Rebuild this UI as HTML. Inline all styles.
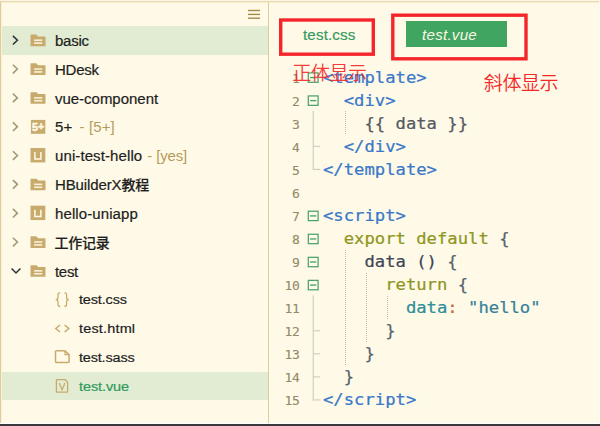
<!DOCTYPE html>
<html lang="zh">
<head>
<meta charset="utf-8">
<title>HBuilderX</title>
<style>
html,body{margin:0;padding:0;}
body{width:600px;height:426px;overflow:hidden;background:#fffae8;position:relative;font-family:"Liberation Sans","Noto Sans CJK SC",sans-serif;}
#app{position:absolute;left:0;top:0;width:600px;height:426px;overflow:hidden;background:#fffae8;}
.abs{position:absolute;}
.ov{left:0;top:0;pointer-events:none;}
/* frame */
#btop0{left:0;top:0;width:600px;height:1px;background:#fbf6e6;}
#btop{left:0;top:1px;width:600px;height:1px;background:#e9d9ab;}
#btop2{left:0;top:2px;width:600px;height:1px;background:#f8efd2;}
#bleft{left:0;top:1px;width:1px;height:423px;background:#dfcc9b;}
#bleft2{left:1px;top:2px;width:1px;height:422px;background:#f9f1da;}
#bright{left:599px;top:0;width:1px;height:424px;background:#fffdf6;}
#bbot0{left:0;top:423px;width:600px;height:1px;background:#ffffff;}
#bbot{left:0;top:424px;width:600px;height:2px;background:#3a3a3c;}
#divider{left:268px;top:2px;width:1px;height:421px;background:#dccda4;}
/* tree */
.row{position:absolute;left:2px;width:266px;height:29px;}
.row.sel{background:#e1ecd2;}
.row .lbl{position:absolute;top:0;height:29px;line-height:29px;font-size:14px;color:#1e1e1e;white-space:nowrap;-webkit-text-stroke:0.2px #1e1e1e;}
.row .lbl .sfx{color:#b59b5b;-webkit-text-stroke:0;letter-spacing:0.1px}
.row.cur .lbl{color:#2f9a5b;-webkit-text-stroke:0.2px #2f9a5b;}
.row .lbl .cj{font-size:14px;font-weight:500;}
.row .lbl .cjs{display:inline-block;transform:scaleX(0.9333);transform-origin:0 50%;}
.row svg{position:absolute;}
/* code */
.ln{position:absolute;left:269.6px;width:30px;text-align:right;font-family:"DejaVu Sans Mono","Liberation Mono",monospace;font-size:13px;letter-spacing:-0.3px;color:#938a66;-webkit-text-stroke:0.12px #938a66;height:23px;line-height:23px;}
.cl{position:absolute;left:322.6px;-webkit-text-stroke:0.22px currentColor;height:23px;line-height:23px;font-family:"DejaVu Sans Mono","Liberation Mono",monospace;font-size:15.5px;white-space:pre;color:#545961;transform:scaleX(1.1102);transform-origin:0 0;}
.t{color:#3a78c8;}
.k{color:#8f961f;}
.p{color:#2e8e99;}
.s{color:#35829a;}
.c{color:#c8643c;}
.b{color:#56656e;}
.i{color:#3d4657;}
.tab{position:absolute;font-size:14px;white-space:nowrap;}
.note{position:absolute;color:#f52828;font-size:19px;font-weight:350;letter-spacing:-0.4px;white-space:nowrap;font-family:"Liberation Sans","Noto Sans CJK SC",sans-serif;}
.rbox{position:absolute;border:3.3px solid #f5252b;box-sizing:border-box;}
</style>
</head>
<body>
<div id="app">
<div class="abs" id="btop0"></div><div class="abs" id="btop"></div><div class="abs" id="btop2"></div>
<div class="abs" id="bleft"></div><div class="abs" id="bleft2"></div>
<div class="abs" id="bright"></div>
<div class="abs" id="divider"></div>


<div id="tree">
<div class="row sel" style="top:25.80px;height:28.83px"><span class="lbl" style="left:52.5px;top:1.1px;height:28.83px;line-height:28.83px;font-size:14.000px;letter-spacing:-0.224px;transform:scaleX(1.0714);transform-origin:0 50%">basic</span></div>
<div class="row" style="top:54.63px;height:28.83px"><span class="lbl" style="left:52.5px;top:1.1px;height:28.83px;line-height:28.83px;font-size:14.000px;letter-spacing:-0.243px;transform:scaleX(1.0714);transform-origin:0 50%">HDesk</span></div>
<div class="row" style="top:83.46px;height:28.83px"><span class="lbl" style="left:52.5px;top:1.1px;height:28.83px;line-height:28.83px;font-size:14.000px;letter-spacing:-0.019px;transform:scaleX(1.0714);transform-origin:0 50%">vue-component</span></div>
<div class="row" style="top:112.29px;height:28.83px"><span class="lbl" style="left:52.5px;top:1.1px;height:28.83px;line-height:28.83px;font-size:14.000px;letter-spacing:0.093px;transform:scaleX(1.0714);transform-origin:0 50%">5+<span class="sfx" style="margin-left:2.8px"> - [5+]</span></span></div>
<div class="row" style="top:141.12px;height:28.83px"><span class="lbl" style="left:52.5px;top:1.1px;height:28.83px;line-height:28.83px;font-size:14.000px;letter-spacing:0.000px;transform:scaleX(1.0714);transform-origin:0 50%"><span style="letter-spacing:0.093px">uni-test-hello</span><span class="sfx" style="margin-left:1px;letter-spacing:-0.15px"> - [yes]</span></span></div>
<div class="row" style="top:169.95px;height:28.83px"><span class="lbl" style="left:52.5px;top:1.1px;height:28.83px;line-height:28.83px;font-size:14.000px;letter-spacing:-0.112px;transform:scaleX(1.0714);transform-origin:0 50%">HBuilderX<span class="cj cjs">教程</span></span></div>
<div class="row" style="top:198.78px;height:28.83px"><span class="lbl" style="left:52.5px;top:1.1px;height:28.83px;line-height:28.83px;font-size:14.000px;letter-spacing:0.093px;transform:scaleX(1.0714);transform-origin:0 50%">hello-uniapp</span></div>
<div class="row" style="top:227.61px;height:28.83px"><span class="lbl" style="left:52.5px;top:1.4px;height:28.83px;line-height:28.83px;letter-spacing:-0.22px"><span class="cj">工作记录</span></span></div>
<div class="row" style="top:256.44px;height:28.83px"><span class="lbl" style="left:52.5px;top:1.1px;height:28.83px;line-height:28.83px;font-size:14.000px;letter-spacing:-0.280px;transform:scaleX(1.0714);transform-origin:0 50%">test</span></div>
<div class="row" style="top:285.27px;height:28.83px"><span class="lbl" style="left:76.8px;top:1.1px;height:28.83px;line-height:28.83px;font-size:13.534px;letter-spacing:-0.149px;transform:scaleX(1.0714);transform-origin:0 50%">test.css</span></div>
<div class="row" style="top:314.10px;height:28.83px"><span class="lbl" style="left:76.8px;top:1.1px;height:28.83px;line-height:28.83px;font-size:13.534px;letter-spacing:0.159px;transform:scaleX(1.0714);transform-origin:0 50%">test.html</span></div>
<div class="row" style="top:342.93px;height:28.83px"><span class="lbl" style="left:76.8px;top:1.1px;height:28.83px;line-height:28.83px;font-size:13.534px;letter-spacing:-0.168px;transform:scaleX(1.0714);transform-origin:0 50%">test.sass</span></div>
<div class="row sel cur" style="top:371.76px;height:28.43px"><span class="lbl" style="left:76.8px;top:1.1px;height:28.83px;line-height:28.83px;font-size:13.534px;letter-spacing:-0.075px;transform:scaleX(1.0714);transform-origin:0 50%">test.vue</span></div>
</div>
<div id="code">

<div class="tab" style="left:302.6px;top:24.4px;height:22px;line-height:22px;color:#379a62;font-size:14.2px;letter-spacing:0.12px;-webkit-text-stroke:0.2px #379a62;transform:scaleX(1.07);transform-origin:0 50%">test.css</div>
<div class="abs" style="left:405.8px;top:21px;width:101px;height:25.8px;background:#40a560"></div>
<div class="tab" style="left:421.8px;top:24.4px;height:22px;line-height:22px;color:#fbf7e4;font-size:14.2px;font-style:italic;letter-spacing:0.22px;transform:scaleX(1.07);transform-origin:0 50%">test.vue</div>
<svg class="abs ov" width="600" height="426" viewBox="0 0 600 426">
<line x1="313.20" y1="110.91" x2="313.20" y2="169.90" stroke="#cdcbc0" stroke-width="1.1"/>
<line x1="313.20" y1="146.34" x2="320.20" y2="146.34" stroke="#cdcbc0" stroke-width="1.1"/>
<line x1="313.20" y1="169.40" x2="320.20" y2="169.40" stroke="#cdcbc0" stroke-width="1.1"/>
<line x1="313.20" y1="295.35" x2="313.20" y2="400.45" stroke="#cdcbc0" stroke-width="1.1"/>
<line x1="313.20" y1="330.78" x2="320.20" y2="330.78" stroke="#cdcbc0" stroke-width="1.1"/>
<line x1="313.20" y1="353.84" x2="320.20" y2="353.84" stroke="#cdcbc0" stroke-width="1.1"/>
<line x1="313.20" y1="376.89" x2="320.20" y2="376.89" stroke="#cdcbc0" stroke-width="1.1"/>
<line x1="313.20" y1="399.95" x2="320.20" y2="399.95" stroke="#cdcbc0" stroke-width="1.1"/>
<line x1="345.5" y1="111" x2="345.5" y2="134" stroke="#bdbbb2" stroke-width="1" stroke-dasharray="1 1" shape-rendering="crispEdges"/>
<line x1="345.5" y1="250" x2="345.5" y2="365" stroke="#bdbbb2" stroke-width="1" stroke-dasharray="1 1" shape-rendering="crispEdges"/>
<line x1="366.5" y1="273" x2="366.5" y2="342" stroke="#bdbbb2" stroke-width="1" stroke-dasharray="1 1" shape-rendering="crispEdges"/>
<line x1="387.5" y1="296" x2="387.5" y2="319" stroke="#bdbbb2" stroke-width="1" stroke-dasharray="1 1" shape-rendering="crispEdges"/>
<g transform="translate(12.90 40.22)"><polyline points="0,-4.3 4.5,0 0,4.3" fill="none" stroke="#34343c" stroke-width="1.6"/></g>
<g transform="translate(30.50 34.52)"><path d="M0,0.5 Q0,0 0.5,0 H5.7 Q6.1,0 6.4,0.4 L7.6,1.9 H14.5 Q15,1.9 15,2.4 V11.7 H0 Z" fill="#c8ab6c"/><rect x="3.6" y="4.9" width="8.2" height="1.6" fill="#f8f0d8"/><rect x="3.6" y="7.8" width="8.2" height="1.6" fill="#f8f0d8"/></g>
<g transform="translate(12.90 69.04)"><polyline points="0,-4.3 4.5,0 0,4.3" fill="none" stroke="#a09878" stroke-width="1.6"/></g>
<g transform="translate(30.50 63.34)"><path d="M0,0.5 Q0,0 0.5,0 H5.7 Q6.1,0 6.4,0.4 L7.6,1.9 H14.5 Q15,1.9 15,2.4 V11.7 H0 Z" fill="#c8ab6c"/><rect x="3.6" y="4.9" width="8.2" height="1.6" fill="#f8f0d8"/><rect x="3.6" y="7.8" width="8.2" height="1.6" fill="#f8f0d8"/></g>
<g transform="translate(12.90 97.88)"><polyline points="0,-4.3 4.5,0 0,4.3" fill="none" stroke="#a09878" stroke-width="1.6"/></g>
<g transform="translate(30.50 92.17)"><path d="M0,0.5 Q0,0 0.5,0 H5.7 Q6.1,0 6.4,0.4 L7.6,1.9 H14.5 Q15,1.9 15,2.4 V11.7 H0 Z" fill="#c8ab6c"/><rect x="3.6" y="4.9" width="8.2" height="1.6" fill="#f8f0d8"/><rect x="3.6" y="7.8" width="8.2" height="1.6" fill="#f8f0d8"/></g>
<g transform="translate(12.90 126.70)"><polyline points="0,-4.3 4.5,0 0,4.3" fill="none" stroke="#a09878" stroke-width="1.6"/></g>
<g transform="translate(30.90 119.90)"><rect x="0" y="0" width="14.4" height="13.9" fill="#c8ab6c"/><text x="1.1" y="11.1" font-family="Liberation Sans,sans-serif" font-size="11.5" font-weight="bold" fill="#fffae8" stroke="#fffae8" stroke-width="0.45" textLength="12.2" lengthAdjust="spacingAndGlyphs">5<tspan dy="-0.9">+</tspan></text></g>
<g transform="translate(12.90 155.53)"><polyline points="0,-4.3 4.5,0 0,4.3" fill="none" stroke="#a09878" stroke-width="1.6"/></g>
<g transform="translate(30.50 148.03)"><rect x="0" y="0" width="14.8" height="14.4" fill="#c8ab6c"/><path d="M4.4,4.0 V10.9 H10.4 V4.0" fill="none" stroke="#fffae8" stroke-width="1.5"/></g>
<g transform="translate(12.90 184.36)"><polyline points="0,-4.3 4.5,0 0,4.3" fill="none" stroke="#a09878" stroke-width="1.6"/></g>
<g transform="translate(30.50 178.66)"><path d="M0,0.5 Q0,0 0.5,0 H5.7 Q6.1,0 6.4,0.4 L7.6,1.9 H14.5 Q15,1.9 15,2.4 V11.7 H0 Z" fill="#c8ab6c"/><rect x="3.6" y="4.9" width="8.2" height="1.6" fill="#f8f0d8"/><rect x="3.6" y="7.8" width="8.2" height="1.6" fill="#f8f0d8"/></g>
<g transform="translate(12.90 213.19)"><polyline points="0,-4.3 4.5,0 0,4.3" fill="none" stroke="#a09878" stroke-width="1.6"/></g>
<g transform="translate(30.50 205.69)"><rect x="0" y="0" width="14.8" height="14.4" fill="#c8ab6c"/><path d="M4.4,4.0 V10.9 H10.4 V4.0" fill="none" stroke="#fffae8" stroke-width="1.5"/></g>
<g transform="translate(12.90 242.03)"><polyline points="0,-4.3 4.5,0 0,4.3" fill="none" stroke="#a09878" stroke-width="1.6"/></g>
<g transform="translate(30.50 236.33)"><path d="M0,0.5 Q0,0 0.5,0 H5.7 Q6.1,0 6.4,0.4 L7.6,1.9 H14.5 Q15,1.9 15,2.4 V11.7 H0 Z" fill="#c8ab6c"/><rect x="3.6" y="4.9" width="8.2" height="1.6" fill="#f8f0d8"/><rect x="3.6" y="7.8" width="8.2" height="1.6" fill="#f8f0d8"/></g>
<g transform="translate(16.00 270.86)"><polyline points="-4.4,-2.4 0,2.1 4.4,-2.4" fill="none" stroke="#34343c" stroke-width="1.6"/></g>
<g transform="translate(30.50 265.16)"><path d="M0,0.5 Q0,0 0.5,0 H5.7 Q6.1,0 6.4,0.4 L7.6,1.9 H14.5 Q15,1.9 15,2.4 V11.7 H0 Z" fill="#c8ab6c"/><rect x="3.6" y="4.9" width="8.2" height="1.6" fill="#f8f0d8"/><rect x="3.6" y="7.8" width="8.2" height="1.6" fill="#f8f0d8"/></g>
<g transform="translate(54.60 292.19)"><path d="M5.6,0.7 C3.7,0.7 3.4,1.5 3.4,3 V5.4 C3.4,6.8 2.6,7.5 1.1,7.5 C2.6,7.5 3.4,8.2 3.4,9.6 V12 C3.4,13.5 3.7,14.3 5.6,14.3" fill="none" stroke="#c8ab6c" stroke-width="1.25"/><path d="M5.6,0.7 C3.7,0.7 3.4,1.5 3.4,3 V5.4 C3.4,6.8 2.6,7.5 1.1,7.5 C2.6,7.5 3.4,8.2 3.4,9.6 V12 C3.4,13.5 3.7,14.3 5.6,14.3" fill="none" stroke="#c8ab6c" stroke-width="1.25" transform="translate(15.4,0) scale(-1,1)"/></g>
<g transform="translate(54.60 323.51)"><polyline points="5.4,1.5 1.2,5 5.4,8.5" fill="none" stroke="#c8ab6c" stroke-width="1.5"/><polyline points="10,1.5 14.2,5 10,8.5" fill="none" stroke="#c8ab6c" stroke-width="1.5"/></g>
<g transform="translate(54.60 350.05)"><path d="M1.8,0.8 H10.4 L14.5,4.6 V11.5 Q14.5,12.4 13.6,12.4 H1.8 Q0.9,12.4 0.9,11.5 V1.7 Q0.9,0.8 1.8,0.8 Z" fill="none" stroke="#c8ab6c" stroke-width="1.5" stroke-linejoin="round"/><path d="M10.4,0.8 V4.6 H14.5" fill="none" stroke="#c8ab6c" stroke-width="1.2"/></g>
<g transform="translate(55.60 378.68)"><path d="M1.6,0.9 H9.4 L12,3.5 V12.6 Q12,13.5 11.1,13.5 H1.6 Q0.8,13.5 0.8,12.6 V1.8 Q0.8,0.9 1.6,0.9 Z" fill="none" stroke="#c8ab6c" stroke-width="1.3" stroke-linejoin="round"/><polyline points="3.6,4.2 6.5,11 9.4,4.2" fill="none" stroke="#c8ab6c" stroke-width="1.25"/></g>
<g transform="translate(313.20 77.48)"><rect x="-4.9" y="-4.6" width="9.8" height="9.4" fill="none" stroke="#4aa36a" stroke-width="1.25"/><line x1="-3.1" y1="0.1" x2="3.1" y2="0.1" stroke="#4aa36a" stroke-width="1.35"/></g>
<g transform="translate(313.20 100.53)"><rect x="-4.9" y="-4.6" width="9.8" height="9.4" fill="none" stroke="#4aa36a" stroke-width="1.25"/><line x1="-3.1" y1="0.1" x2="3.1" y2="0.1" stroke="#4aa36a" stroke-width="1.35"/></g>
<g transform="translate(313.20 215.81)"><rect x="-4.9" y="-4.6" width="9.8" height="9.4" fill="none" stroke="#4aa36a" stroke-width="1.25"/><line x1="-3.1" y1="0.1" x2="3.1" y2="0.1" stroke="#4aa36a" stroke-width="1.35"/></g>
<g transform="translate(313.20 238.86)"><rect x="-4.9" y="-4.6" width="9.8" height="9.4" fill="none" stroke="#4aa36a" stroke-width="1.25"/><line x1="-3.1" y1="0.1" x2="3.1" y2="0.1" stroke="#4aa36a" stroke-width="1.35"/></g>
<g transform="translate(313.20 261.92)"><rect x="-4.9" y="-4.6" width="9.8" height="9.4" fill="none" stroke="#4aa36a" stroke-width="1.25"/><line x1="-3.1" y1="0.1" x2="3.1" y2="0.1" stroke="#4aa36a" stroke-width="1.35"/></g>
<g transform="translate(313.20 284.97)"><rect x="-4.9" y="-4.6" width="9.8" height="9.4" fill="none" stroke="#4aa36a" stroke-width="1.25"/><line x1="-3.1" y1="0.1" x2="3.1" y2="0.1" stroke="#4aa36a" stroke-width="1.35"/></g>
<g stroke="#a8874a" stroke-width="1.4"><line x1="248" y1="10.5" x2="260" y2="10.5"/><line x1="248" y1="14.4" x2="260" y2="14.4"/><line x1="248" y1="18.2" x2="260" y2="18.2"/></g>
</svg>
<div class="ln" style="top:66.60px">1</div>
<div class="cl" style="top:66.70px"><span class="t">&lt;template&gt;</span></div>
<div class="ln" style="top:89.66px">2</div>
<div class="cl" style="top:89.75px">  <span class="t">&lt;div&gt;</span></div>
<div class="ln" style="top:112.71px">3</div>
<div class="cl" style="top:112.81px">    {{ data }}</div>
<div class="ln" style="top:135.77px">4</div>
<div class="cl" style="top:135.87px">  <span class="t">&lt;/div&gt;</span></div>
<div class="ln" style="top:158.82px">5</div>
<div class="cl" style="top:158.92px"><span class="t">&lt;/template&gt;</span></div>
<div class="ln" style="top:181.88px">6</div>
<div class="ln" style="top:204.93px">7</div>
<div class="cl" style="top:205.03px"><span class="t">&lt;script&gt;</span></div>
<div class="ln" style="top:227.98px">8</div>
<div class="cl" style="top:228.08px">  <span class="k">export default</span> <span class="b">{</span></div>
<div class="ln" style="top:251.04px">9</div>
<div class="cl" style="top:251.14px">    <span class="i">data ()</span> <span class="b">{</span></div>
<div class="ln" style="top:274.09px">10</div>
<div class="cl" style="top:274.19px">      <span class="k">return</span> <span class="b">{</span></div>
<div class="ln" style="top:297.15px">11</div>
<div class="cl" style="top:297.25px">        <span class="p">data</span><span class="c">:</span> <span class="s">"hello"</span></div>
<div class="ln" style="top:320.20px">12</div>
<div class="cl" style="top:320.31px">      <span class="b">}</span></div>
<div class="ln" style="top:343.26px">13</div>
<div class="cl" style="top:343.36px">    <span class="b">}</span></div>
<div class="ln" style="top:366.31px">14</div>
<div class="cl" style="top:366.41px">  <span class="b">}</span></div>
<div class="ln" style="top:389.37px">15</div>
<div class="cl" style="top:389.47px"><span class="t">&lt;/script&gt;</span></div>
<svg class="abs ov" width="600" height="426" viewBox="0 0 600 426">
<g fill="none" stroke="#f5252b" stroke-width="3.4"><rect x="280.7" y="20" width="92.6" height="34.2"/><rect x="392.8" y="15.2" width="133.2" height="43.6"/></g>
</svg>
<div class="note" style="left:292.3px;top:61.8px;height:24px;line-height:24px;opacity:0.9">正体显示</div>
<div class="note" style="left:483.8px;top:72.2px;height:24px;line-height:24px">斜体显示</div>

</div>

<div class="abs" id="bbot0"></div><div class="abs" id="bbot"></div>
</div>
</body>
</html>
